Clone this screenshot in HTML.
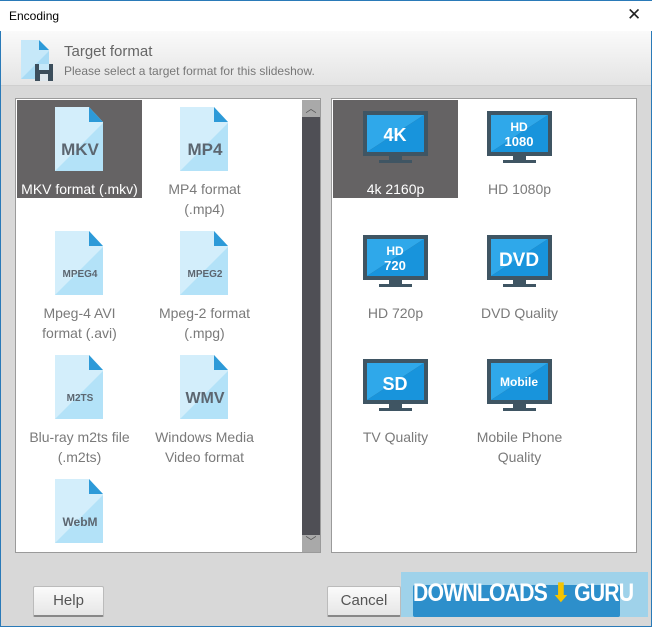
<!DOCTYPE html>
<html><head><meta charset="utf-8"><style>
*{margin:0;padding:0;box-sizing:border-box}
body{width:652px;height:627px;overflow:hidden;background:#d8d8d8;font-family:"Liberation Sans",sans-serif;position:relative}
.win{position:absolute;inset:0;border:1px solid #2a7ab8;border-top:none}
.title{position:absolute;left:0;top:0;width:652px;height:31px;background:#fff;border-top:1px solid #2a7ab8}
.title .tt{position:absolute;left:9px;top:8px;font-size:12px;color:#000}
.title .x{position:absolute;left:627px;top:4px;font-size:17px;color:#222}
.hdr{position:absolute;left:1px;top:31px;width:650px;height:55px;background:linear-gradient(#fafafa,#e4e4e4);border-bottom:1px solid #cfcfcf}
.hdr .t1{position:absolute;left:63px;top:12px;font-size:15px;color:#666}
.hdr .t2{position:absolute;left:63px;top:33px;font-size:12px;color:#777}
.panel{position:absolute;top:98px;height:455px;background:#fff;border:1px solid #9a9a9a}
.tile{position:absolute;width:125px;height:98px;text-align:center;color:#7a7a7a;font-size:14px;line-height:20px}
.tile.sel{background:#656364;color:#fff}
.tile svg{position:absolute;left:38px;top:7px}
.tile .l{position:absolute;left:0;right:0;top:79px}
.mt svg{left:30px;top:11px}
.btn{position:absolute;top:586px;height:31px;background:linear-gradient(#fbfbfb,#e6e6e6);border:1px solid #bbb;border-bottom:2px solid #888;font-size:15px;color:#555;text-align:center;line-height:28px;border-radius:2px}
</style></head><body>
<div class="win"></div>
<div class="title"><span class="tt">Encoding</span><span class="x">✕</span></div>
<div class="hdr">
<svg style="position:absolute;left:18px;top:8px" width="36" height="44"><polygon points="2,1 20,1 30,11 30,40 2,40" fill="#c6e8f9"/><polygon points="2,40 30,12 30,40" fill="#a8dbf5"/><polygon points="20,1 30,11 20,11" fill="#2d9ad8"/><rect x="16" y="25" width="18" height="17" fill="#3c4e5c"/><rect x="20" y="25" width="10" height="6" fill="#c6e8f9"/><rect x="21" y="35" width="8" height="7" fill="#dfe8ee"/></svg>
<div class="t1">Target format</div><div class="t2">Please select a target format for this slideshow.</div>
</div>

<div class="panel" style="left:15px;width:306px">
<div style="position:absolute;left:286px;top:1px;width:18px;height:452px;background:#4f4f55"></div>
<div style="position:absolute;left:286px;top:1px;width:18px;height:17px;background:#a9a9a9;color:#555;font-size:11px;text-align:center">︿</div>
<div style="position:absolute;left:286px;top:436px;width:18px;height:17px;background:#a9a9a9;color:#555;font-size:11px;text-align:center;line-height:14px">﹀</div>
</div>
<div class="panel" style="left:331px;width:306px"></div>

<svg width="0" height="0" style="position:absolute"><defs>
<g id="f"><polygon points="0,0 34,0 48,15 48,64 0,64" fill="#d3eefb"/><polygon points="0,64 48,16 48,64" fill="#b3e2f8"/><polygon points="34,0 48,15 34,15" fill="#2d9ad8"/></g>
<g id="m"><rect x="0" y="0" width="65" height="45" fill="#3f5563"/><polygon points="4,4 61,4 4,41" fill="#2fa8ea"/><polygon points="61,4 61,41 4,41" fill="#1894dc"/><rect x="26" y="45" width="13" height="4" fill="#3f5563"/><rect x="16" y="49" width="33" height="3" fill="#3f5563"/></g>
</defs></svg>

<div class="tile sel" style="left:17px;top:100px"><svg width="50" height="66"><use href="#f"/><text x="25" y="48" font-size="17" font-weight="bold" fill="#5c6670" text-anchor="middle" font-family="Liberation Sans">MKV</text></svg><div class="l">MKV format (.mkv)</div></div>
<div class="tile" style="left:142px;top:100px"><svg width="50" height="66"><use href="#f"/><text x="25" y="48" font-size="17" font-weight="bold" fill="#5c6670" text-anchor="middle" font-family="Liberation Sans">MP4</text></svg><div class="l">MP4 format<br>(.mp4)</div></div>
<div class="tile" style="left:17px;top:224px"><svg width="50" height="66"><use href="#f"/><text x="25" y="46" font-size="10" font-weight="bold" fill="#5c6670" text-anchor="middle" font-family="Liberation Sans">MPEG4</text></svg><div class="l">Mpeg-4 AVI<br>format (.avi)</div></div>
<div class="tile" style="left:142px;top:224px"><svg width="50" height="66"><use href="#f"/><text x="25" y="46" font-size="10" font-weight="bold" fill="#5c6670" text-anchor="middle" font-family="Liberation Sans">MPEG2</text></svg><div class="l">Mpeg-2 format<br>(.mpg)</div></div>
<div class="tile" style="left:17px;top:348px"><svg width="50" height="66"><use href="#f"/><text x="25" y="46" font-size="10" font-weight="bold" fill="#5c6670" text-anchor="middle" font-family="Liberation Sans">M2TS</text></svg><div class="l">Blu-ray m2ts file<br>(.m2ts)</div></div>
<div class="tile" style="left:142px;top:348px"><svg width="50" height="66"><use href="#f"/><text x="25" y="48" font-size="16" font-weight="bold" fill="#5c6670" text-anchor="middle" font-family="Liberation Sans">WMV</text></svg><div class="l">Windows Media<br>Video format</div></div>
<div class="tile" style="left:17px;top:472px;height:78px;overflow:hidden"><svg width="50" height="66"><use href="#f"/><text x="25" y="47" font-size="12" font-weight="bold" fill="#5c6670" text-anchor="middle" font-family="Liberation Sans">WebM</text></svg></div>

<div class="tile mt sel" style="left:333px;top:100px"><svg width="65" height="53"><use href="#m"/><text x="32" y="30" font-size="18" font-weight="bold" fill="#fff" text-anchor="middle" font-family="Liberation Sans">4K</text></svg><div class="l">4k 2160p</div></div>
<div class="tile mt" style="left:457px;top:100px"><svg width="65" height="53"><use href="#m"/><text x="32" y="20" font-size="12" font-weight="bold" fill="#fff" text-anchor="middle" font-family="Liberation Sans">HD</text><text x="32" y="35" font-size="13" font-weight="bold" fill="#fff" text-anchor="middle" font-family="Liberation Sans">1080</text></svg><div class="l">HD 1080p</div></div>
<div class="tile mt" style="left:333px;top:224px"><svg width="65" height="53"><use href="#m"/><text x="32" y="20" font-size="12" font-weight="bold" fill="#fff" text-anchor="middle" font-family="Liberation Sans">HD</text><text x="32" y="35" font-size="13" font-weight="bold" fill="#fff" text-anchor="middle" font-family="Liberation Sans">720</text></svg><div class="l">HD 720p</div></div>
<div class="tile mt" style="left:457px;top:224px"><svg width="65" height="53"><use href="#m"/><text x="32" y="31" font-size="19" font-weight="bold" fill="#fff" text-anchor="middle" font-family="Liberation Sans">DVD</text></svg><div class="l">DVD Quality</div></div>
<div class="tile mt" style="left:333px;top:348px"><svg width="65" height="53"><use href="#m"/><text x="32" y="31" font-size="18" font-weight="bold" fill="#fff" text-anchor="middle" font-family="Liberation Sans">SD</text></svg><div class="l">TV Quality</div></div>
<div class="tile mt" style="left:457px;top:348px"><svg width="65" height="53"><use href="#m"/><text x="32" y="27" font-size="12" font-weight="bold" fill="#fff" text-anchor="middle" font-family="Liberation Sans">Mobile</text></svg><div class="l">Mobile Phone<br>Quality</div></div>

<div class="btn" style="left:33px;width:71px">Help</div>
<div class="btn" style="left:327px;width:74px">Cancel</div>
<div style="position:absolute;left:401px;top:572px;width:247px;height:45px;background:#9fd2ea"></div>
<div style="position:absolute;left:413px;top:585px;width:207px;height:32px;background:#2d8fcb;border-radius:2px"></div>
<div style="position:absolute;left:413px;top:578px;font-size:25px;font-weight:bold;color:#fff;letter-spacing:-1px;transform:scaleX(0.85);transform-origin:left;white-space:nowrap">DOWNLOADS<span style="color:#f5c400"> ⬇ </span>GURU</div>
</body></html>
